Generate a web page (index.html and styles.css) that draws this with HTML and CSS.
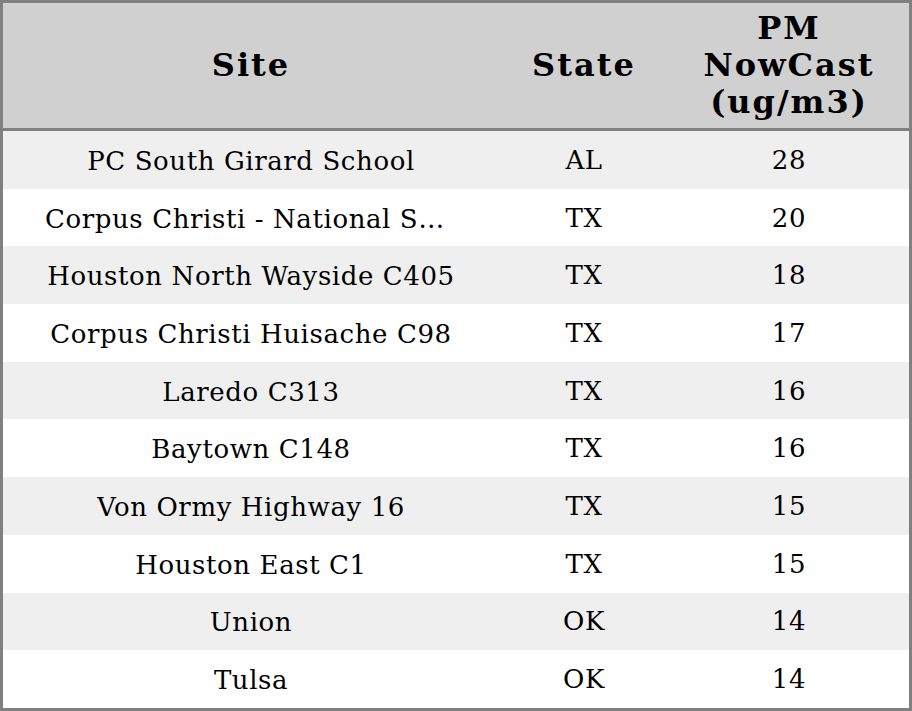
FILE: index.html
```html
<!DOCTYPE html>
<html>
<head>
<meta charset="utf-8">
<link rel="stylesheet" href="styles.css">
</head>
<body>
<table class="grid">
  <thead>
    <tr>
      <th class="c-site">Site</th>
      <th class="c-state">State</th>
      <th class="c-pm">PM<br>NowCast<br>(ug/m3)</th>
    </tr>
  </thead>
  <tbody>
    <tr><td><span class="clip">PC South Girard School</span></td><td>AL</td><td>28</td></tr>
    <tr><td><span class="clip">Corpus Christi - National Seashore</span></td><td>TX</td><td>20</td></tr>
    <tr><td><span class="clip">Houston North Wayside C405</span></td><td>TX</td><td>18</td></tr>
    <tr><td><span class="clip">Corpus Christi Huisache C98</span></td><td>TX</td><td>17</td></tr>
    <tr><td><span class="clip">Laredo C313</span></td><td>TX</td><td>16</td></tr>
    <tr><td><span class="clip">Baytown C148</span></td><td>TX</td><td>16</td></tr>
    <tr><td><span class="clip">Von Ormy Highway 16</span></td><td>TX</td><td>15</td></tr>
    <tr><td><span class="clip">Houston East C1</span></td><td>TX</td><td>15</td></tr>
    <tr><td><span class="clip">Union</span></td><td>OK</td><td>14</td></tr>
    <tr><td><span class="clip">Tulsa</span></td><td>OK</td><td>14</td></tr>
  </tbody>
</table>
</body>
</html>
```
FILE: styles.css
```css
html, body {
  margin: 0;
  padding: 0;
  background: #ffffff;
}
.grid {
  width: 912px;
  height: 711px;
  border-collapse: separate;
  border-spacing: 0;
  border: 3px solid #808080;
  box-sizing: border-box;
  table-layout: fixed;
  font-family: "DejaVu Serif", serif;
  color: #000;
}
.grid th {
  background: #d0d0d0;
  font-weight: bold;
  font-size: 32px;
  letter-spacing: 2px;
  line-height: 37px;
  height: 125px;
  padding: 0;
  text-align: center;
  vertical-align: middle;
  border-bottom: 3px solid #808080;
}
.c-site { width: 496px; }
.c-state { width: 170px; }
.c-pm { width: 240px; }
.grid td {
  font-size: 26px;
  letter-spacing: 0.6px;
  height: 57.7px;
  padding: 0;
  text-align: center;
  vertical-align: middle;
}
.grid tbody tr:nth-child(odd) td { background: #efefef; }
.grid tbody tr:nth-child(even) td { background: #ffffff; }
.clip {
  display: inline-block;
  max-width: 412px;
  white-space: nowrap;
  overflow: hidden;
  text-overflow: ellipsis;
  vertical-align: middle;
}
```
